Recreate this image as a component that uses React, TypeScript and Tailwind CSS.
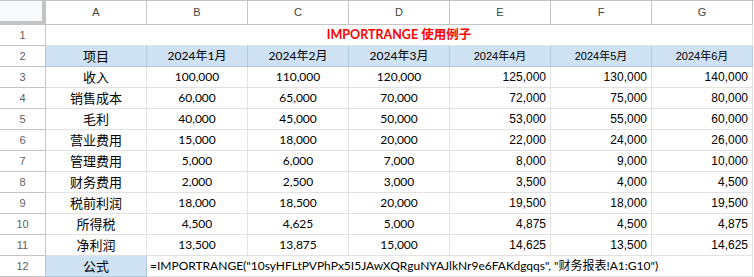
const cols = ["A", "B", "C", "D", "E", "F", "G"];
const months = ["2024年1月", "2024年2月", "2024年3月", "2024年4月", "2024年5月", "2024年6月"];

const rows: [string, string[]][] = [
  ["收入", ["100,000", "110,000", "120,000", "125,000", "130,000", "140,000"]],
  ["销售成本", ["60,000", "65,000", "70,000", "72,000", "75,000", "80,000"]],
  ["毛利", ["40,000", "45,000", "50,000", "53,000", "55,000", "60,000"]],
  ["营业费用", ["15,000", "18,000", "20,000", "22,000", "24,000", "26,000"]],
  ["管理费用", ["5,000", "6,000", "7,000", "8,000", "9,000", "10,000"]],
  ["财务费用", ["2,000", "2,500", "3,000", "3,500", "4,000", "4,500"]],
  ["税前利润", ["18,000", "18,500", "20,000", "19,500", "18,000", "19,500"]],
  ["所得税", ["4,500", "4,625", "5,000", "4,875", "4,500", "4,875"]],
  ["净利润", ["13,500", "13,875", "15,000", "14,625", "13,500", "14,625"]],
];

const calibri = "font-['Lato','Noto_Sans_CJK_SC',sans-serif]";
const arial = "font-['Liberation_Sans','Noto_Sans_CJK_SC',sans-serif]";
const cjk = "font-['Noto_Sans_CJK_SC',sans-serif]";

const rowHead = `flex items-center justify-center border-r border-b border-[#c4c4c4] text-[11px] text-[#5f5f5f] ${arial}`;
const cell = "flex items-center border-r border-b border-[#e2e2e2] text-black";
const blueCell = "flex items-center justify-center border-r border-b border-[#b4c9de] bg-[#cfe2f3] text-black";

export default function App() {
  return (
    <div className="w-[754px] h-[277px] bg-white overflow-hidden">
      <div className="grid grid-cols-[46px_repeat(7,101px)] grid-rows-[24px_repeat(12,21px)] border-t border-[#c4c4c4]">
        {/* corner */}
        <div className="border-r border-b border-[#c4c4c4]">
          <div className="w-[42px] h-[20px] bg-[#f8f9fa] border-r-4 border-b-4 border-[#c4c4c4] box-content" />
        </div>
        {cols.map((c) => (
          <div key={c} className={`flex items-center justify-center border-r border-b border-[#c4c4c4] text-[11px] text-[#444] ${arial}`}>
            {c}
          </div>
        ))}

        {/* row 1 */}
        <div className={rowHead}>1</div>
        <div className={`col-span-7 ${cell} justify-center text-[12.5px] font-bold ${calibri}`}>
          <span className="text-[#ff0000]">IMPORTRANGE 使用例子</span>
        </div>

        {/* row 2 */}
        <div className={rowHead}>2</div>
        <div className={`${blueCell} text-[13px] ${cjk}`}>项目</div>
        {months.map((m, i) => (
          <div key={m} className={`${blueCell} ${i < 3 ? `text-[12px] ${calibri}` : `text-[11px] ${arial}`}`}>
            {m}
          </div>
        ))}

        {rows.map(([label, vals], r) => (
          <div key={label} className="contents">
            <div className={rowHead}>{r + 3}</div>
            <div className={`${cell} justify-center text-[13px] ${cjk}`}>{label}</div>
            {vals.map((v, i) => (
              <div
                key={i}
                className={`${cell} ${i < 3 ? `justify-center text-[12px] ${calibri}` : `justify-end pr-[4px] text-[12px] ${arial}`}`}
              >
                {v}
              </div>
            ))}
          </div>
        ))}

        {/* row 12 */}
        <div className={rowHead}>12</div>
        <div className={`${blueCell} text-[13px] ${cjk}`}>公式</div>
        <div className={`col-span-6 ${cell} pl-[3px] text-[12px] whitespace-nowrap ${calibri}`}>
          =IMPORTRANGE("10syHFLtPVPhPx5I5JAwXQRguNYAJlkNr9e6FAKdgqqs", "财务报表!A1:G10")
        </div>
      </div>
    </div>
  );
}
